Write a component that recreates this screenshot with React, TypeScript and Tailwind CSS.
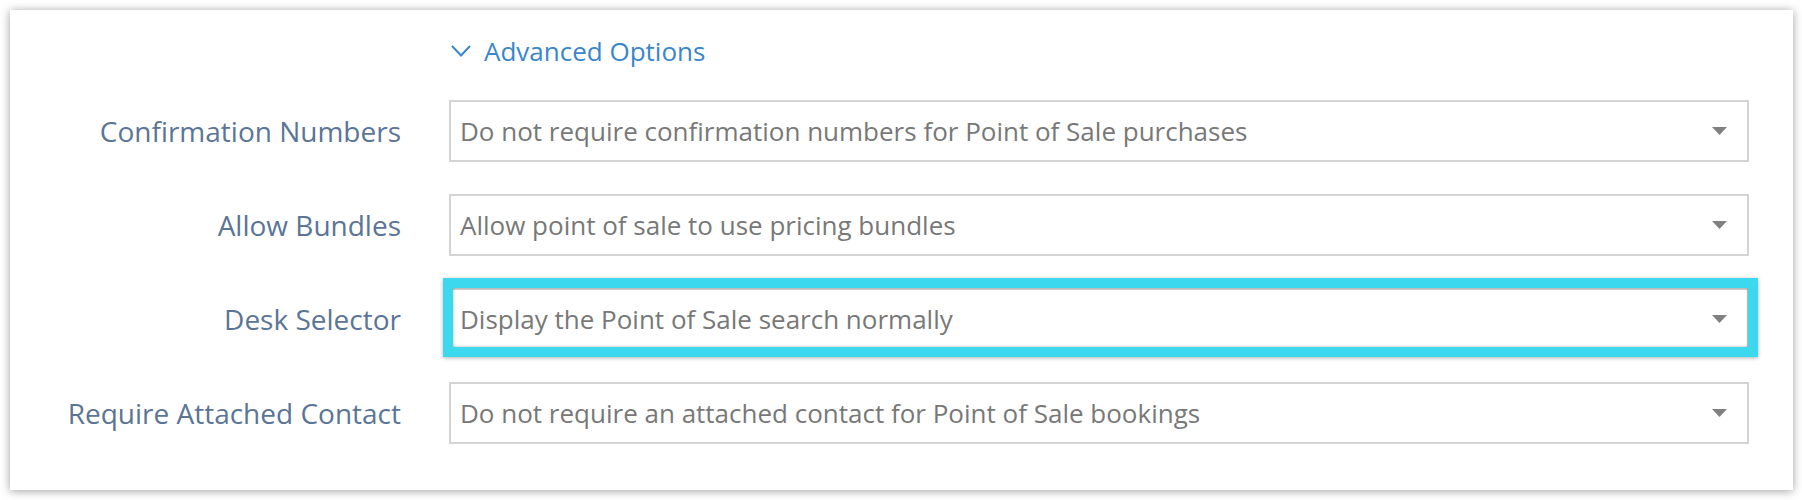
import React from "react";

const rows = [
  { label: "Confirmation Numbers", value: "Do not require confirmation numbers for Point of Sale purchases", hl: false },
  { label: "Allow Bundles", value: "Allow point of sale to use pricing bundles", hl: false },
  { label: "Desk Selector", value: "Display the Point of Sale search normally", hl: true },
  { label: "Require Attached Contact", value: "Do not require an attached contact for Point of Sale bookings", hl: false },
];

function Select({ value, hl }: { value: string; hl: boolean }) {
  return (
    <div className="relative flex-1">
      <div className="flex h-[62px] items-center justify-between border-2 border-[#d4d4d4] bg-white pl-[9px] pr-[20px]">
        <span className="text-[26px] leading-[36px] text-[#787878]">{value}</span>
        <svg width="15" height="8" viewBox="0 0 15 8" className="shrink-0">
          <path d="M0 0 H15 L7.5 8 Z" fill="#808080" />
        </svg>
      </div>
      {hl && (
        <div className="pointer-events-none absolute -left-[6px] -top-[10px] -right-[9px] -bottom-[7px] border-[10px] border-[#3cd9ee] shadow-[0_1px_4px_rgba(0,0,0,0.3),inset_0_0_3px_rgba(0,0,0,0.35)]" />
      )}
    </div>
  );
}

export default function App() {
  return (
    <div className="h-[500px] w-[1802px] bg-white p-[10px]" style={{ fontFamily: '"Open Sans", "Noto Sans", sans-serif' }}>
      <div className="flex h-[480px] w-[1783px] flex-col bg-white pr-[44px] pt-[23px] shadow-[0_1px_9px_rgba(0,0,0,0.38)]">
        <div className="flex h-[36px] items-center pl-[441px]">
          <svg width="20" height="12" viewBox="0 0 20 12" className="mr-[13px]">
            <path d="M1 1 L10 10.5 L19 1" fill="none" stroke="#3a86cc" strokeWidth="2" />
          </svg>
          <span className="text-[26px] leading-[36px] text-[#3a86cc]">Advanced Options</span>
        </div>
        <div className="mt-[31px] flex flex-col gap-[32px]">
          {rows.map((r) => (
            <div key={r.label} className="flex items-center">
              <div className="w-[391px] shrink-0 text-right text-[28px] leading-[38px] text-[#5b7596]">{r.label}</div>
              <div className="ml-[48px] flex flex-1">
                <Select value={r.value} hl={r.hl} />
              </div>
            </div>
          ))}
        </div>
      </div>
    </div>
  );
}
